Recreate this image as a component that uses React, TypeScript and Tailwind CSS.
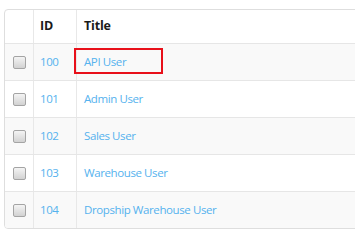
import React from "react";

type Row = { id: number; title: string };

const rows: Row[] = [
	{ id: 100, title: "API User" },
	{ id: 101, title: "Admin User" },
	{ id: 102, title: "Sales User" },
	{ id: 103, title: "Warehouse User" },
	{ id: 104, title: "Dropship Warehouse User" },
];

const Check = () => (
	<span className="block h-[13px] w-[13px] rounded-[2px] border border-[#a4a4a4] bg-gradient-to-b from-[#f4f4f4] to-[#d2d2d2]" />
);

const App = () => {
	return (
		<div
			className="h-[250px] w-[355px] overflow-hidden bg-white pl-1 pt-[9px]"
			style={{ fontFamily: '"Open Sans", "Liberation Sans", sans-serif' }}
		>
			<div className="w-[420px] overflow-hidden rounded-[4px] border border-[#dedede] text-[11.5px] tracking-[-0.4px]">
				{/* header */}
				<div className="grid h-[33px] grid-cols-[28px_43px_1fr] text-[12.5px] font-bold tracking-[-0.2px] text-[#1a1a1a]">
					<div />
					<div className="flex items-center border-l border-[#e8e8e8] pl-[6px]">ID</div>
					<div className="flex items-center border-l border-[#e8e8e8] pl-[7px]">Title</div>
				</div>
				{rows.map((r, i) => (
					<div
						key={r.id}
						className={
							"grid h-[37px] grid-cols-[28px_43px_1fr] border-t border-[#e6e6e6] text-[#55b2ee] " +
							(i % 2 === 0 ? "bg-[#f9f9f9]" : "bg-white")
						}
					>
						<div className="flex items-center justify-center">
							<Check />
						</div>
						<div className="flex items-center border-l border-[#e8e8e8] pl-[6px]">{r.id}</div>
						<div className="relative flex items-center border-l border-[#e8e8e8] pl-[7px]">
							{r.title}
							{i === 0 && (
								<span className="absolute left-[-3px] top-[4px] h-[26px] w-[89px] border-2 border-[#e8101a]" />
							)}
						</div>
					</div>
				))}
			</div>
		</div>
	);
};

export default App;
